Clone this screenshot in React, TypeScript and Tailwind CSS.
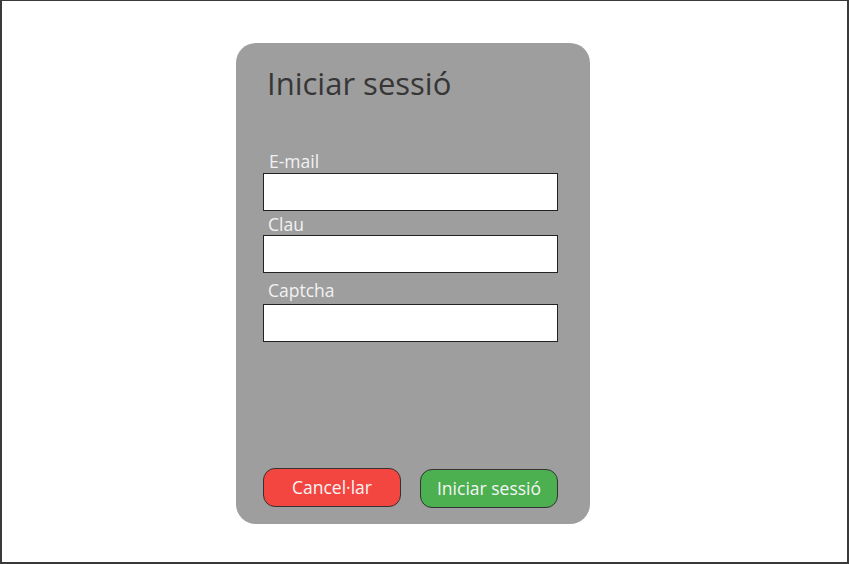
export default function App() {
  return (
    <div className="w-[849px] h-[564px] bg-white border-t border-l-2 border-r-2 border-b-2 border-[#3a3a3a] relative" style={{ fontFamily: "'Open Sans', 'Noto Sans', sans-serif" }}>
      <div className="ml-[234px] mt-[42px] w-[354px] h-[481px] rounded-[20px] bg-[#9e9e9e] flex flex-col pl-[27px] pr-[32px]">
        <h1 className="ml-[4px] mt-[20px] text-[31px] leading-[40px] text-[#363636]">Iniciar sessió</h1>
        <div className="mt-[48px] flex flex-col">
          <label className="ml-[6px] text-[17.5px] leading-[20px] text-[#f2f2f2]">E-mail</label>
          <div className="mt-[2px] h-[38px] bg-white border border-[#222]" />
          <label className="ml-[5px] mt-[3px] text-[17.5px] leading-[20px] text-[#f2f2f2]">Clau</label>
          <div className="mt-[1px] h-[38px] bg-white border border-[#222]" />
          <label className="ml-[5px] mt-[7px] text-[17.5px] leading-[20px] text-[#f2f2f2]">Captcha</label>
          <div className="mt-[4px] h-[38px] bg-white border border-[#222]" />
        </div>
        <div className="mt-auto mb-[16px] flex justify-between">
          <button className="w-[138px] h-[39px] rounded-[12px] bg-[#f44640] border border-[#333] text-[#f5f5f5] text-[17.5px]">Cancel·lar</button>
          <button className="w-[138px] h-[39px] mt-[1px] rounded-[12px] bg-[#4caf50] border border-[#333] text-[#f5f5f5] text-[17.5px]">Iniciar sessió</button>
        </div>
      </div>
    </div>
  );
}
